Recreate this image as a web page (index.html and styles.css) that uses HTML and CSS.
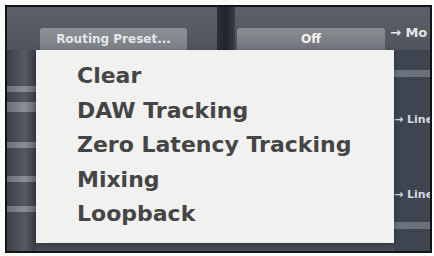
FILE: index.html
```html
<!DOCTYPE html>
<html>
<head>
<meta charset="utf-8">
<link rel="stylesheet" href="styles.css">
</head>
<body>
<div class="frame">
  <div class="toprow">
    <div class="btn preset">Routing Preset...</div>
    <div class="divider"></div>
    <div class="btn off">Off</div>
    <div class="label">→ Mo</div>
  </div>
  <div class="body">
    <div class="leftstrip">
      <div class="band b1"></div>
      <div class="band b2"></div>
      <div class="band b3"></div>
      <div class="band b4"></div>
      <div class="band b5"></div>
    </div>
    <div class="center"></div>
    <div class="rightstrip">
      <div class="rband"></div>
      <div class="line l1">→ Line</div>
      <div class="line l2">→ Line</div>
      <div class="rband bottom"></div>
    </div>
  </div>
  <ul class="menu">
    <li>Clear</li>
    <li>DAW Tracking</li>
    <li>Zero Latency Tracking</li>
    <li>Mixing</li>
    <li>Loopback</li>
  </ul>
</div>
</body>
</html>
```
FILE: styles.css
```css
html, body {
  margin: 0;
  padding: 0;
  background: #fbfbf9;
}
body {
  width: 434px;
  height: 256px;
  overflow: hidden;
  font-family: "DejaVu Sans", "Liberation Sans", sans-serif;
}
.frame {
  position: relative;
  margin: 5px 2px 0 5px;
  width: 423px;
  height: 244px;
  border: 2px solid #141414;
  background: #474c55;
  display: flex;
  flex-direction: column;
  overflow: hidden;
}
.toprow {
  height: 43px;
  display: flex;
  align-items: flex-end;
  background: linear-gradient(#5b6069, #50555d);
}
.btn {
  height: 22px;
  border-radius: 3px 3px 0 0;
  color: #f2f2f2;
  font-size: 12px;
  font-weight: bold;
  display: flex;
  align-items: center;
  justify-content: center;
}
.preset {
  margin-left: 33px;
  width: 147px;
  background: linear-gradient(#8d9196, #7b7f85);
  color: #e4e6e9;
}
.divider {
  width: 18px;
  height: 43px;
  margin-left: 30px;
  background: linear-gradient(90deg, #2e3238, #202328, #3a3e45);
}
.off {
  margin-left: 2px;
  width: 148px;
  background: linear-gradient(#8a8e93, #72767c);
}
.label {
  margin-left: 5px;
  height: 24px;
  color: #e2e5e9;
  font-size: 13px;
  font-weight: bold;
  display: flex;
  align-items: center;
  margin-bottom: 6px;
  white-space: nowrap;
}
.body {
  flex: 1;
  display: flex;
}
.leftstrip {
  width: 29px;
  background: linear-gradient(90deg, #3c4048, #555a62 60%, #3a3e46);
  display: flex;
  flex-direction: column;
}
.band {
  height: 6px;
  background: linear-gradient(90deg, #6a6f77, #8b9097 60%, #666b73);
}
.b1 { margin-top: 36px; }
.b2 { margin-top: 10px; height: 10px; }
.b3 { margin-top: 30px; }
.b4 { margin-top: 28px; }
.b5 { margin-top: 24px; }
.center {
  flex: 1;
  background: #4a4f58;
}
.rightstrip {
  width: 36px;
  background: #3f4550;
  display: flex;
  flex-direction: column;
  position: relative;
}
.rband {
  margin-top: 20px;
  height: 7px;
  background: #6c727c;
}
.rband.bottom {
  margin-top: auto;
  margin-bottom: 22px;
}
.line {
  position: absolute;
  left: 0;
  color: #d4d8de;
  font-size: 11px;
  font-weight: bold;
  white-space: nowrap;
}
.l1 { top: 63px; }
.l2 { top: 138px; }
.menu {
  position: absolute;
  left: 29px;
  top: 43px;
  width: 358px;
  height: 193px;
  margin: 0;
  padding: 9px 0 0 41px;
  box-sizing: border-box;
  list-style: none;
  background: #f1f1ef;
  box-shadow: 0 2px 6px rgba(0,0,0,0.35);
}
.menu li {
  font-size: 22px;
  line-height: 34.5px;
  color: #454545;
  font-weight: bold;
  letter-spacing: 0;
}
```
